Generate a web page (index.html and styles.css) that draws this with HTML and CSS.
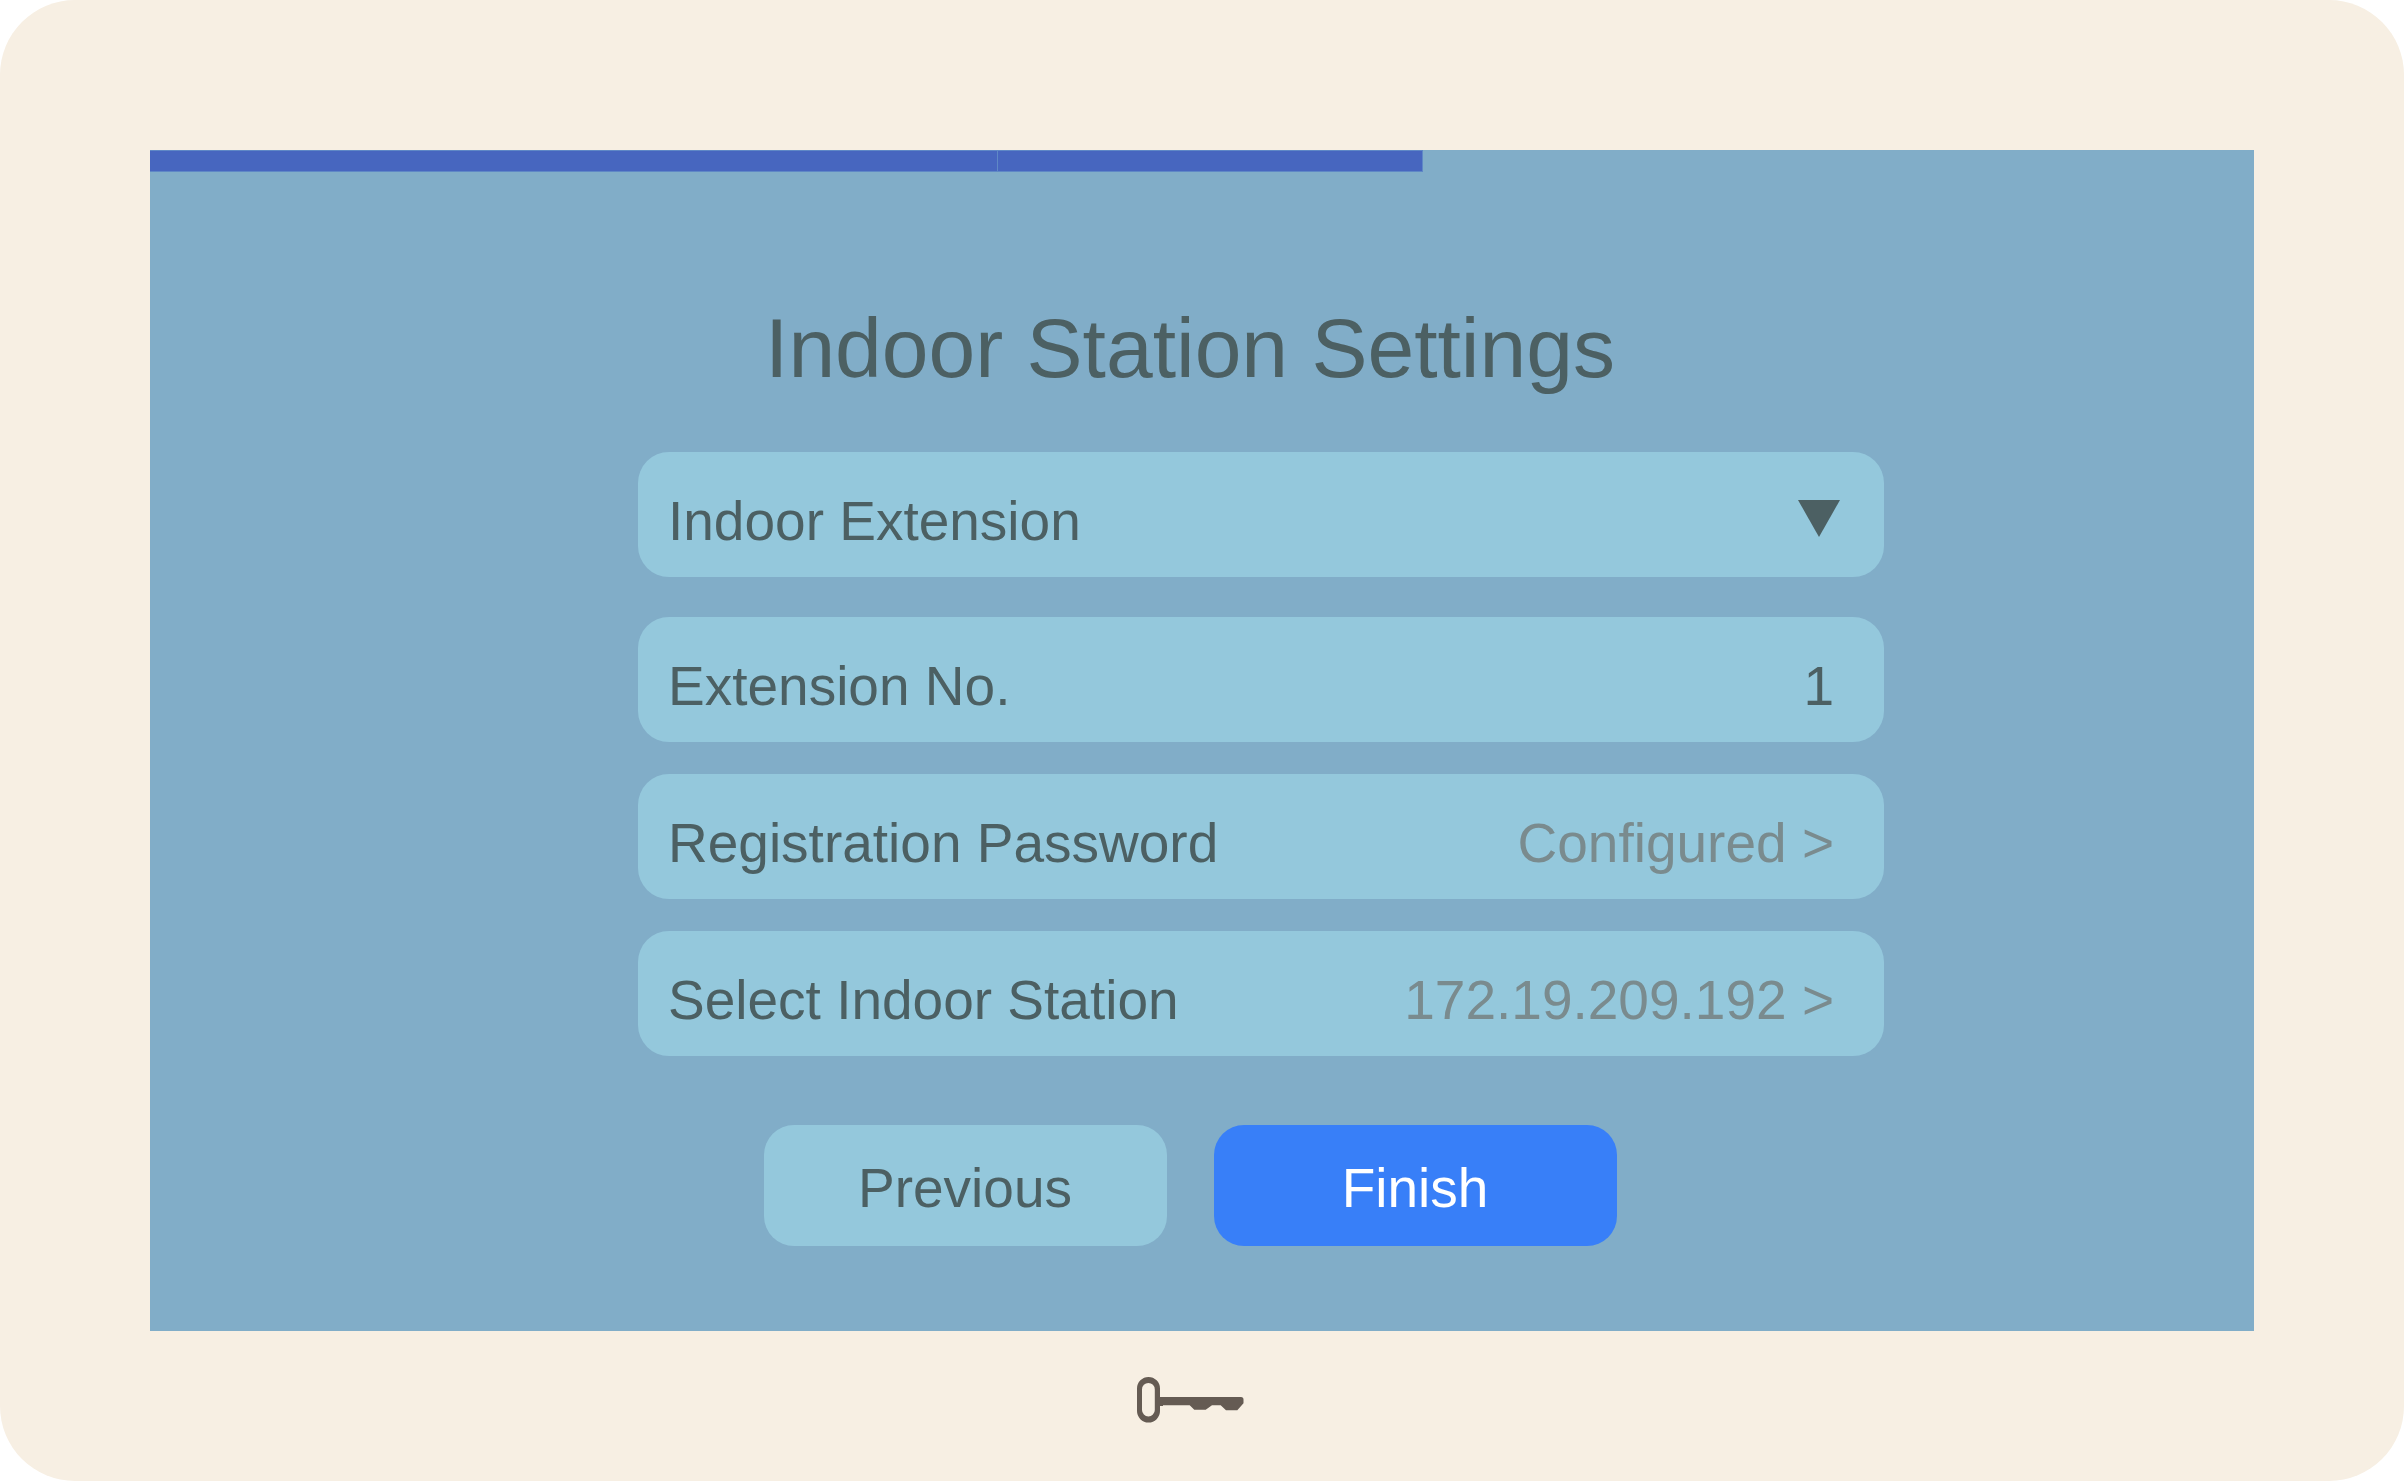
FILE: index.html
```html
<!DOCTYPE html>
<html lang="en">
<head>
    <meta charset="UTF-8">
    <meta name="viewport" content="width=device-width, initial-scale=1.0">
    <title>Indoor Station Settings</title>
    <link rel="stylesheet" href="styles.css">
</head>
<body>
    <div class="device">
        <main class="screen">
            <div class="progress">
                <div class="progress-step" style="width: 40.3%"></div>
                <div class="progress-step" style="width: 20.2%"></div>
            </div>

            <form class="settings">
                <h1>Indoor Station Settings</h1>

                <div class="fields">
                    <div class="select-wrap">
                        <select class="row" id="stationType" aria-label="Station type">
                            <option>Indoor Extension</option>
                            <option>Indoor Station</option>
                        </select>
                        <svg class="arrow" viewBox="0 0 42 37" aria-hidden="true">
                            <path d="M0 0H42L21 37Z"/>
                        </svg>
                    </div>

                    <div class="row">
                        <label for="extensionNo">Extension No.</label>
                        <input type="text" inputmode="numeric" id="extensionNo" value="1">
                    </div>

                    <button type="button" class="row">
                        <span>Registration Password</span>
                        <span class="value">Configured &gt;</span>
                    </button>

                    <button type="button" class="row">
                        <span>Select Indoor Station</span>
                        <span class="value">172.19.209.192 &gt;</span>
                    </button>
                </div>

                <div class="actions">
                    <button type="button" class="btn">Previous</button>
                    <button type="submit" class="btn btn-primary">Finish</button>
                </div>
            </form>
        </main>

        <footer class="chin">
            <svg class="key" viewBox="0 0 107 46" aria-hidden="true">
                <path fill-rule="evenodd" d="M11.5 0A11.5 11.5 0 0 1 23 11.5V34A11.5 11.5 0 0 1 0 34V11.5A11.5 11.5 0 0 1 11.5 0ZM11.4 6A6.4 6.4 0 0 0 5 12.4V33A6.4 6.4 0 0 0 17.8 33V12.4A6.4 6.4 0 0 0 11.4 6Z"/>
                <path d="M22 20H104Q106.5 20 106.5 22.5V26.3L100.3 33.3H89L83.7 28.2H75L68.7 32.7H57.3L52.7 28.2H26V29H22Z"/>
            </svg>
        </footer>
    </div>
</body>
</html>
```

FILE: styles.css
```css
* {
    box-sizing: border-box;
}
body {
    margin: 0;
    background-color: #fff;
    font-family: "Liberation Sans", Arial, sans-serif;
    font-size: 55px;
    color: #4c6063;
}
.device {
    display: flex;
    flex-direction: column;
    min-height: 100vh;
    padding: 150px 150px 0;
    background-color: #f7efe3;
    border-radius: 75px;
}
.screen {
    flex: 1;
    background-color: #81adc8;
}
.progress {
    display: flex;
    height: 22px;
}
.progress-step {
    background-color: #4766bf;
    border: 1px solid #5f88c6;
    border-left: none;
}
.settings {
    display: flex;
    flex-direction: column;
    align-items: center;
    padding: 126px 24px 84px 0;
}
h1 {
    margin: 0 0 54px;
    font-size: 84px;
    font-weight: normal;
    line-height: 100px;
}
.fields {
    display: flex;
    flex-direction: column;
    gap: 32px;
    width: 100%;
    max-width: 1388px;
    padding-left: 142px;
}
.row {
    display: flex;
    align-items: center;
    justify-content: space-between;
    width: 100%;
    height: 125px;
    padding: 12px 50px 0 30px;
    background-color: #94c8dc;
    border: none;
    border-radius: 31px;
    font: inherit;
    color: inherit;
    text-align: left;
}
.row input {
    width: 200px;
    padding: 0;
    background: none;
    border: none;
    font: inherit;
    color: inherit;
    text-align: right;
}
.value {
    color: #7a8b8e;
}
.select-wrap {
    position: relative;
    margin-bottom: 8px;
}
select.row {
    display: block;
    appearance: none;
}
.arrow {
    position: absolute;
    top: 48px;
    right: 44px;
    width: 42px;
    height: 37px;
    fill: #4c6063;
    pointer-events: none;
}
.actions {
    display: flex;
    gap: 47px;
    margin-top: 69px;
}
.btn {
    width: 403px;
    height: 121px;
    padding: 4px 0 0;
    background-color: #94c8dc;
    border: none;
    border-radius: 30px;
    font: inherit;
    color: inherit;
}
.btn-primary {
    background-color: #387ff8;
    color: #fff;
}
.row, .btn {
    cursor: pointer;
}
.chin {
    display: flex;
    justify-content: center;
    height: 150px;
    padding: 46px 24px 0 0;
}
.key {
    width: 107px;
    height: 46px;
    fill: #655b53;
}
```
